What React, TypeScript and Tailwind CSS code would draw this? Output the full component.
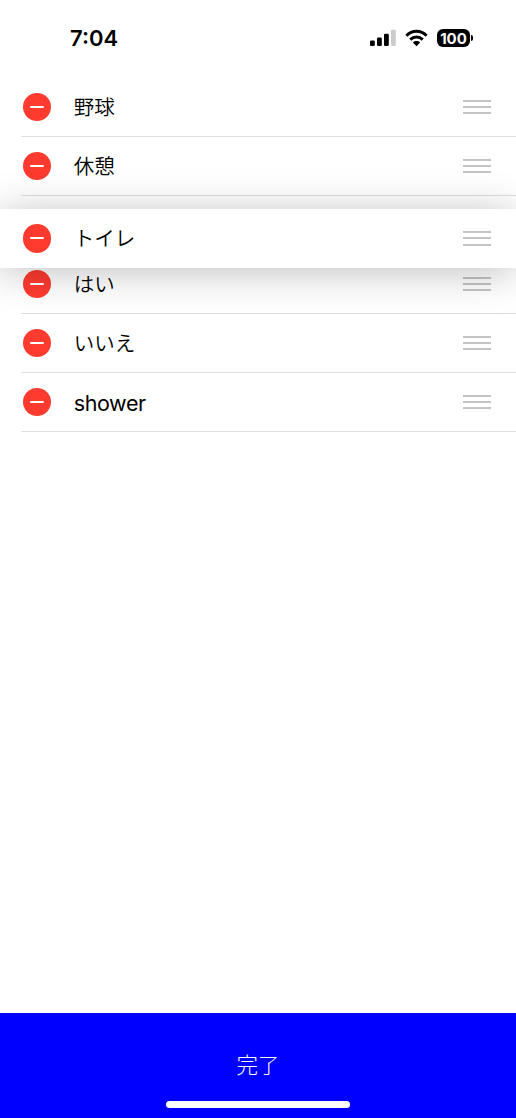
import React from "react";

interface Item {
  id: number;
  label: string;
  latin?: boolean;
  dragging?: boolean;
}

const items: Item[] = [
  { id: 1, label: "野球" },
  { id: 2, label: "休憩" },
  { id: 3, label: "トイレ", dragging: true },
  { id: 4, label: "はい" },
  { id: 5, label: "いいえ" },
  { id: 6, label: "shower", latin: true },
];

const StatusBar = () => (
  <header className="flex h-[78px] shrink-0 items-start justify-between pr-[43px] pl-[70px]">
    <span className="mt-[22px] font-['Inter',sans-serif] text-[22px] leading-8 font-semibold">
      7:04
    </span>
    <div className="mt-[29px] flex items-center">
      <svg width="26" height="18" viewBox="0 0 26 18" className="mr-[9px]">
        <rect x="0" y="11.5" width="4.8" height="5.5" rx="1.2" />
        <rect x="7" y="8.5" width="4.8" height="8.5" rx="1.2" />
        <rect x="14" y="4.7" width="4.8" height="12.3" rx="1.2" />
        <rect x="21" y="0.8" width="4.8" height="16.2" rx="1.2" fill="#cccccc" />
      </svg>
      <svg width="23" height="18" viewBox="0 0 23 18" className="mr-[9px]">
        <g fill="none" stroke="#000" strokeWidth="3">
          <path d="M1.4 6.7C7 .9 16 .9 21.6 6.7" />
          <path d="M5.3 10.6C8.8 7.2 14.2 7.2 17.7 10.6" />
        </g>
        <path d="M11.5 17.2 7.9 13.4C9.9 11.6 13.1 11.6 15.1 13.4Z" />
      </svg>
      <div className="flex h-[18px] w-[33px] items-center justify-center rounded-[6px] bg-black font-['Inter',sans-serif] text-[15px] leading-none font-bold text-white">
        100
      </div>
      <div className="ml-px h-[6px] w-[2px] rounded-r-full bg-black" />
    </div>
  </header>
);

const RowContent = ({ label, latin }: Item) => (
  <>
    <button
      aria-label="Delete"
      className="flex size-[28.5px] shrink-0 items-center justify-center rounded-full bg-[#ff3b30]"
    >
      <span className="h-[2px] w-[14px] rounded-full bg-white" />
    </button>
    <span
      className={
        latin
          ? "mt-px ml-[22.5px] flex-1 font-['Inter',sans-serif] text-[21.5px] leading-8 tracking-[-0.4px]"
          : "mb-[2px] ml-[22.5px] flex-1 font-['Noto_Sans_CJK_JP',sans-serif] text-[20.5px] leading-8 font-[350]"
      }
    >
      {label}
    </span>
    <div className="flex w-7 flex-col gap-[4.4px]">
      <span className="h-[2px] bg-[#c4c4c6]" />
      <span className="h-[2px] bg-[#c4c4c6]" />
      <span className="h-[2px] bg-[#c4c4c6]" />
    </div>
  </>
);

const Row = (item: Item) => {
  if (item.dragging) {
    return (
      <li className="relative h-[59px]">
        <div className="absolute inset-x-0 top-[13px] z-10 flex h-[58.5px] items-center bg-white pr-[25px] pl-[22.75px] shadow-[0_4px_40px_rgba(0,0,0,0.25)]">
          <RowContent {...item} />
        </div>
      </li>
    );
  }
  return (
    <li className="ml-[21px] flex h-[59px] items-center border-b border-[#dfdfe1] pr-[25px] pl-[1.75px]">
      <RowContent {...item} />
    </li>
  );
};

const App = () => {
  return (
    <div className="flex h-screen w-full flex-col overflow-hidden bg-white text-black">
      <StatusBar />
      <ul className="flex-1">
        {items.map((item) => (
          <Row key={item.id} {...item} />
        ))}
      </ul>
      <footer className="flex h-[105px] shrink-0 flex-col items-center bg-[#0000ff]">
        <button className="mt-[35px] font-['Noto_Sans_CJK_JP',sans-serif] text-[21.5px] leading-8 font-light text-white">
          完了
        </button>
        <div className="mt-[21px] h-[7px] w-[184px] rounded-full bg-white" />
      </footer>
    </div>
  );
};

export default App;
